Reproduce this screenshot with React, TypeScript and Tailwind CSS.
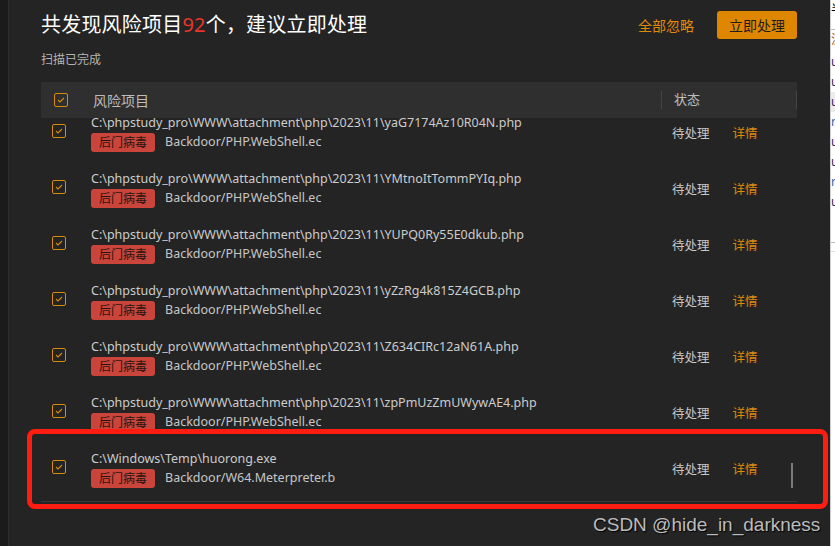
import React from "react";

const rows = [
  { path: "C:\\phpstudy_pro\\WWW\\attachment\\php\\2023\\11\\yaG7174Az10R04N.php", name: "Backdoor/PHP.WebShell.ec" },
  { path: "C:\\phpstudy_pro\\WWW\\attachment\\php\\2023\\11\\YMtnoItTommPYIq.php", name: "Backdoor/PHP.WebShell.ec" },
  { path: "C:\\phpstudy_pro\\WWW\\attachment\\php\\2023\\11\\YUPQ0Ry55E0dkub.php", name: "Backdoor/PHP.WebShell.ec" },
  { path: "C:\\phpstudy_pro\\WWW\\attachment\\php\\2023\\11\\yZzRg4k815Z4GCB.php", name: "Backdoor/PHP.WebShell.ec" },
  { path: "C:\\phpstudy_pro\\WWW\\attachment\\php\\2023\\11\\Z634CIRc12aN61A.php", name: "Backdoor/PHP.WebShell.ec" },
  { path: "C:\\phpstudy_pro\\WWW\\attachment\\php\\2023\\11\\zpPmUzZmUWywAE4.php", name: "Backdoor/PHP.WebShell.ec" },
  { path: "C:\\Windows\\Temp\\huorong.exe", name: "Backdoor/W64.Meterpreter.b" },
];

function Check() {
  return (
    <div className="w-[14px] h-[14px] border border-[#d98a0b] rounded-[2px] flex items-center justify-center shrink-0">
      <svg width="8" height="6" viewBox="0 0 8 6" fill="none">
        <path d="M1 3 L3 5 L7 1" stroke="#d98a0b" strokeWidth="1.1" />
      </svg>
    </div>
  );
}

export default function App() {
  const font = { fontFamily: '"Noto Sans", "Noto Sans CJK SC", sans-serif' };
  return (
    <div className="w-[835px] h-[546px] flex overflow-hidden bg-[#242424] relative" style={font}>
      <div className="w-[9px] bg-[#1b1b1b] border-r border-[#2c2c2c] shrink-0" />
      <div className="flex-1 flex flex-col pl-[32px] pr-[33px]">
        <div className="flex items-center h-[48px] pt-[2px]">
          <div className="text-[20px] leading-[28px] text-white tracking-[0.2px]">
            共发现风险项目<span className="text-[#e8352a]">92</span>个，建议立即处理
          </div>
          <div className="ml-auto text-[14px] text-[#e0890a]">全部忽略</div>
          <div className="ml-[23px] w-[80px] h-[28px] rounded-[3px] bg-[#df8600] text-[#1e1e1e] text-[14px] flex items-center justify-center">
            立即处理
          </div>
        </div>
        <div className="text-[12px] text-[#b4b4b4] leading-[16px] mt-[4px]">扫描已完成</div>
        <div className="mt-[14px] h-[36px] bg-[#2f2f2f] flex items-center relative">
          <div className="ml-[13px]"><Check /></div>
          <div className="ml-[25px] text-[14px] text-[#bdbdbd] flex-1">风险项目</div>
          <div className="w-px h-[18px] bg-[#444]" />
          <div className="w-[134px] pl-[12px] text-[13px] text-[#bdbdbd]">状态</div>
          <div className="w-px h-[18px] bg-[#444]" />
        </div>
        <div className="h-[384px] overflow-hidden relative">
          <div className="-mt-[15px]">
            {rows.map((r, i) => (
              <div key={i} className="h-[56px] flex items-start">
                <div className="ml-[11px] mt-[21px]"><Check /></div>
                <div className="ml-[25px] flex-1 min-w-0">
                  <div className="mt-[11px] text-[12.5px] leading-[18px] text-[#cccccc] whitespace-nowrap">{r.path}</div>
                  <div className="mt-[1px] flex items-center">
                    <div className="h-[19px] w-[64px] rounded-[3px] bg-[#c9443a] text-[#2a1512] text-[12px] flex items-center justify-center">后门病毒</div>
                    <div className="ml-[10px] text-[12.5px] text-[#c6c6c6]">{r.name}</div>
                  </div>
                </div>
                <div className="w-[125px] mt-[23px] flex text-[12.5px] leading-[16px]">
                  <span className="text-[#c8c8c8]">待处理</span>
                  <span className="ml-[23px] text-[#e0890a]">详情</span>
                </div>
              </div>
            ))}
            <div className="h-[6px]" />
            <div className="h-px bg-[#3a3a3a]" />
          </div>
          <div className="absolute left-[750px] top-[345px] w-[2px] h-[25px] bg-[#7a7a7a]" />
        </div>
      </div>
      <div className="w-[5px] bg-white shrink-0 border-l border-[#cfcfcf] flex flex-col overflow-hidden text-[12px] leading-[20px] text-[#3a1a6a]">
        <div className="h-[30px] border-b border-[#bbb] text-black">半</div>
        <div className="h-[22px] text-[#b05a2a]">注</div>
        <div>u</div>
        <div>u</div>
        <div className="bg-[#ececec]">u</div>
        <div className="text-[#2a6ab0]">r</div>
        <div>u</div>
        <div>u</div>
        <div className="text-[#2a6ab0]">r</div>
        <div>u</div>
        <div className="mt-[30px] h-px bg-[#bbb]" />
        <div className="mt-[8px] h-px bg-[#ddd]" />
      </div>
      <div className="absolute left-[27px] top-[429px] w-[801px] h-[80px] border-[5px] border-[#ff1c10] rounded-[8px]" />
      <div
        className="absolute left-[593px] top-[512px] text-[19px] leading-[26px] text-[#bcbcbc]"
        style={{ fontFamily: '"Liberation Sans", Arial, sans-serif', textShadow: "1px 1px 1px #000" }}
      >
        CSDN @hide_in_darkness
      </div>
    </div>
  );
}
